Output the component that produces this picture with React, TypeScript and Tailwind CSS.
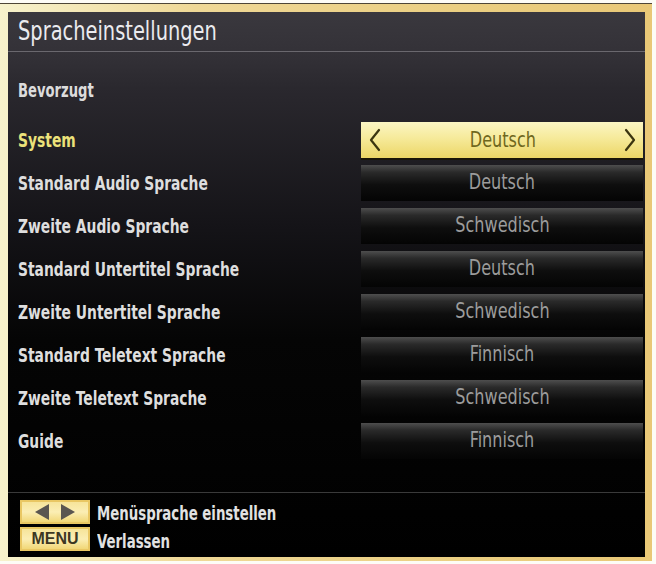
const font = {
  fontFamily: '"DejaVu Sans Condensed", "DejaVu Sans", sans-serif',
};

const rows = [
  { label: "System", value: "Deutsch" },
  { label: "Standard Audio Sprache", value: "Deutsch" },
  { label: "Zweite Audio Sprache", value: "Schwedisch" },
  { label: "Standard Untertitel Sprache", value: "Deutsch" },
  { label: "Zweite Untertitel Sprache", value: "Schwedisch" },
  { label: "Standard Teletext Sprache", value: "Finnisch" },
  { label: "Zweite Teletext Sprache", value: "Schwedisch" },
  { label: "Guide", value: "Finnisch" },
];

// condensed look of the TV menu font
const narrow = "inline-block origin-left scale-x-[0.77] whitespace-nowrap";

const Chevron = ({ dir }: { dir: "left" | "right" }) => (
  <svg width="14" height="26" viewBox="0 0 14 26" fill="none">
    <polyline
      points={dir === "left" ? "11,3 3,13 11,23" : "3,3 11,13 3,23"}
      stroke="#3b3510"
      strokeWidth="2.2"
      strokeLinecap="round"
      strokeLinejoin="round"
    />
  </svg>
);

const ValueBox = ({ value, active }: { value: string; active: boolean }) =>
  active ? (
    <div className="flex h-[36px] w-[282px] items-center justify-between bg-[linear-gradient(180deg,#fbf6c4_0%,#f6ea9a_45%,#ecd666_100%)] pl-[7px] pr-[6px] shadow-[0_2px_0_#1a1608]">
      <Chevron dir="left" />
      <span className="inline-block origin-center translate-y-[1px] scale-x-[0.85] text-[21px] text-[#6f671e]">{value}</span>
      <Chevron dir="right" />
    </div>
  ) : (
    <div className="flex h-[36px] w-[282px] items-center justify-center bg-[linear-gradient(180deg,#4e4e4e_0%,#2a2a2a_20%,#0e0e0e_55%,#040404_100%)]">
      <span className="inline-block origin-center scale-x-[0.85] text-[21px] text-[#9c9c9c]">{value}</span>
    </div>
  );

const Key = ({ children }: { children: React.ReactNode }) => (
  <div className="flex h-[24px] w-[70px] shrink-0 items-center justify-center border-[2px] border-[#e9c763] bg-[linear-gradient(180deg,#f6e49a_0%,#fbeeb4_50%,#f1d777_100%)]">
    {children}
  </div>
);

export default function App() {
  return (
    <div className="h-[564px] w-[656px] bg-[#fdfcf6] pt-[3px]" style={font}>
      <div className="h-[558px] w-[652px] border-t border-[#4e4636] bg-[linear-gradient(90deg,#f7f2cc_0%,#efd896_30%,#ebcf82_70%,#e9c877_100%)] pb-[4px] pl-[8px] pr-[7px] pt-[8px]">
        <div className="flex h-[545px] w-[637px] flex-col overflow-hidden bg-[linear-gradient(180deg,#3a383e_0%,#333137_8%,#2a282e_14%,#141317_40%,#050505_60%,#000000_100%)]">
          <div className="flex h-[40px] items-center border-b border-[#6a686e] pl-[10px] text-[26px] text-[#ebebef]">
            <span className="inline-block origin-left scale-x-[0.83] whitespace-nowrap">Spracheinstellungen</span>
          </div>
          <div className="pt-[17px]">
            <div className="flex h-[43px] items-center pl-[10px] text-[19px] font-bold text-[#dcdcdc]">
              <span className={narrow}>Bevorzugt</span>
            </div>
            <div className="mt-[6px] flex flex-col">
              {rows.map((r, i) => (
                <div key={r.label} className="flex h-[43px] items-center justify-between pl-[10px] pr-[2px]">
                  <span
                    className={
                      i === 0
                        ? "text-[20px] font-bold text-[#ece27a]"
                        : "text-[20px] font-bold text-[#dedede]"
                    }
                  >
                    <span className={narrow}>{r.label}</span>
                  </span>
                  <ValueBox value={r.value} active={i === 0} />
                </div>
              ))}
            </div>
          </div>
          <div className="flex-1" />
          <div className="flex h-[65px] flex-col gap-[3px] border-t border-[#3a3a3a] pl-[12px] pt-[7px]">
            <div className="flex h-[24px] items-center gap-[7px]">
              <Key>
                <div className="flex items-center gap-[12px]">
                  <span className="h-0 w-0 border-y-[8px] border-r-[14px] border-y-transparent border-r-[#5a5650]" />
                  <span className="h-0 w-0 border-y-[8px] border-l-[14px] border-y-transparent border-l-[#5a5650]" />
                </div>
              </Key>
              <span className="translate-y-[1px] text-[20px] font-bold leading-none text-[#e2e2e2]">
                <span className="inline-block origin-left scale-x-[0.74] whitespace-nowrap">Menüsprache einstellen</span>
              </span>
            </div>
            <div className="flex h-[24px] items-center gap-[7px]">
              <Key>
                <span
                  className="text-[16px] font-bold leading-none text-[#3d3722]"
                  style={{ fontFamily: '"Liberation Sans", Arial, sans-serif' }}
                >
                  MENU
                </span>
              </Key>
              <span className="translate-y-[2px] text-[20px] font-bold leading-none text-[#e2e2e2]">
                <span className="inline-block origin-left scale-x-[0.74] whitespace-nowrap">Verlassen</span>
              </span>
            </div>
          </div>
        </div>
      </div>
    </div>
  );
}
